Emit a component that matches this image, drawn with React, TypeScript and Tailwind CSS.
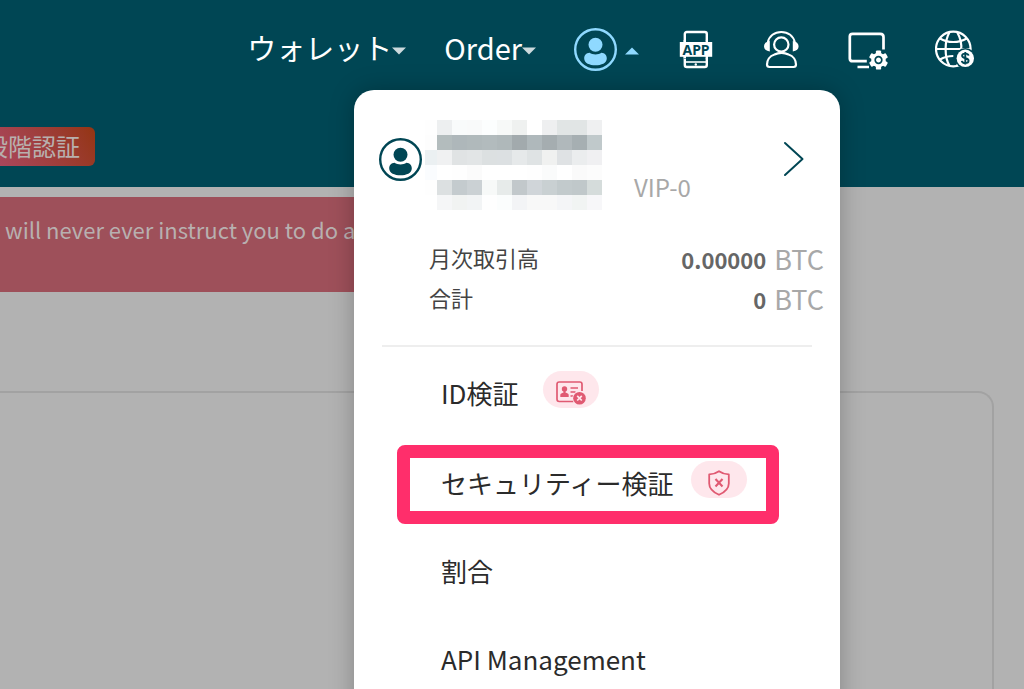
import React from 'react';

const MOSAIC = [
  ['#fefefe', '#edeff0', '#f9fbfb', '#f9fafa', '#fcfefe', '#f7f9f8', '#eff1f0', '#ffffff', '#eeeff0', '#e1e5e5', '#e1e5e5', '#eff0f1'],
  ['#fdfdfd', '#b3bcbd', '#aeb7ba', '#b0b9bb', '#b2bbbd', '#afb8ba', '#a2aaad', '#afb8bb', '#a5adb0', '#b0b8bb', '#a6afb2', '#c0c9cb'],
  ['#ebf0f2', '#f0f1f2', '#e0e3e4', '#e2e5e6', '#dce0e1', '#dce0e2', '#e6e9ea', '#dfe3e4', '#f0f1f0', '#dfe2e4', '#ebedee', '#f0f0f2'],
  ['#fafcfe', '#ffffff', '#fefefe', '#fbfbfb', '#ffffff', '#ffffff', '#ffffff', '#fefefe', '#fafbfb', '#ffffff', '#fafafa', '#fcfcfc'],
  ['#fefefe', '#dce0e1', '#c4cbce', '#cbd1d4', '#f7f9f8', '#e7ebea', '#c2c8cb', '#d0d5d9', '#c9d0d2', '#c2cacc', '#c0c8ca', '#d5dcdb'],
  ['#ffffff', '#f5f6f7', '#f1f3f2', '#f2f4f5', '#fefefe', '#fbfdfd', '#f3f4f6', '#f8f8f8', '#f8f8f8', '#f4f5f7', '#f1f4f3', '#f7f7f9'],
];

const UserIcon = ({ className }: { className?: string }) => (
  <svg width="43" height="43" viewBox="0 0 43 43" fill="none" className={className} aria-hidden="true">
    <circle cx="21.5" cy="21.5" r="20.3" stroke="currentColor" strokeWidth="2.4" />
    <circle cx="21.5" cy="16.8" r="7" fill="currentColor" />
    <path
      d="M15.600 24.800c-3.400.2-5.400 2.600-5.400 5.600 0 4.600 5.400 6.800 11.300 6.800s11.300-2.200 11.300-6.800c0-3-2-5.400-5.400-5.600-1.500 1-3.700 1.600-5.900 1.600s-4.400-.6-5.900-1.600z"
      fill="currentColor"
    />
  </svg>
);

const AppIcon = () => (
  <svg width="40" height="40" viewBox="0 0 40 40" fill="none" aria-hidden="true">
    <rect x="7.8" y="3" width="22" height="35" rx="2" stroke="currentColor" strokeWidth="2.4" />
    <path d="M8 33h22" stroke="currentColor" strokeWidth="1.6" />
    <rect x="7" y="11.500" width="24" height="18" fill="#004654" />
    <path d="M7.800 11v18M29.800 11v19" stroke="currentColor" strokeWidth="2.4" />
    <rect x="2.800" y="13" width="32.400" height="14.800" fill="currentColor" />
    <text x="19" y="25.500" textAnchor="middle" fontSize="14" fontWeight="700" fontFamily="'Noto Sans'" fill="#004654">
      APP
    </text>
    <circle cx="18.800" cy="35.500" r="1.200" fill="currentColor" />
  </svg>
);

const SupportIcon = () => (
  <svg width="40" height="40" viewBox="0 0 40 40" fill="none" stroke="currentColor" aria-hidden="true">
    <circle cx="18.300" cy="15.500" r="7.200" strokeWidth="2.200" />
    <path d="M4.800 13.500C6 7 11.500 3 18.300 3s12.300 4 13.500 10.500" strokeWidth="2" />
    <path d="M6.800 12v10.500C3 22 1 20 1 17.300S3 12.500 6.800 12zM29.800 12v10.500c3.800-.5 5.800-2.500 5.800-5.200s-2-4.800-5.800-5.300z" fill="currentColor" stroke="none" />
    <path d="M11.500 25.500C6.500 27 4 31.500 4 35.500 4 37 5 38 6.500 38h24c1.500 0 2.500-1 2.500-2.500 0-4-2.500-8.500-7.500-10-2.200-1.200-4.500-1.700-7-1.700s-4.800.5-7 1.700z" strokeWidth="2.200" />
  </svg>
);

const MonitorIcon = () => (
  <svg width="40" height="40" viewBox="0 0 40 40" fill="none" stroke="currentColor" className="overflow-visible" aria-hidden="true">
    <path d="M34.500 20.500V8c0-2-1.200-3.200-3.200-3.200H3.600C1.800 4.800.8 5.800.8 7.600v21.800c0 1.800 1 2.800 2.800 2.800h14.200M8.500 38H20" strokeWidth="2.700" />
    <g transform="translate(29.500 31)">
      <g fill="currentColor" stroke="none">
        <circle r="7.300" />
        <rect x="-2.600" y="-9.600" width="5.200" height="19.200" rx="1.200" />
        <rect x="-2.600" y="-9.600" width="5.200" height="19.200" rx="1.200" transform="rotate(60)" />
        <rect x="-2.600" y="-9.600" width="5.200" height="19.200" rx="1.200" transform="rotate(120)" />
      </g>
      <circle r="3.300" stroke="#004654" strokeWidth="1.700" />
    </g>
  </svg>
);

const GlobeIcon = () => (
  <svg width="40" height="40" viewBox="0 0 40 40" fill="none" stroke="currentColor" aria-hidden="true">
    <g strokeWidth="2.200">
      <circle cx="18.300" cy="20" r="17.300" />
      <path d="M1 20h34.500M5 9.500c3.800 2.300 8 3.500 13.300 3.500s9.500-1.200 13.300-3.500M5 30.500c3.800-2.300 8-3.500 13.300-3.500" />
      <path d="M14.500 3.200C9.300 12 9.300 28 14.500 36.800M22.200 3.200C25.500 9 27 15 26 21M22 37c1-2 1.500-3 2-5" />
    </g>
    <circle cx="30.300" cy="29.300" r="10.300" fill="#004654" stroke="none" />
    <circle cx="30.300" cy="29.300" r="8.700" fill="currentColor" stroke="none" />
    <path d="M33.600 26.600c-.3-1.300-1.500-2-3.300-2s-3.200.8-3.200 2.200c0 3.300 6.500 1.600 6.500 5 0 1.500-1.400 2.300-3.300 2.300s-3.300-.8-3.500-2.300M30.300 23v12.600" stroke="#004654" strokeWidth="1.900" />
  </svg>
);

const IdRejectedIcon = () => (
  <svg width="30" height="24" viewBox="0 0 30 24" fill="none" aria-hidden="true">
    <path d="M17.500 20.500H3.200c-1.400 0-2.200-.8-2.200-2.200V3.200C1 1.800 1.800 1 3.200 1h20.600c1.400 0 2.200.8 2.200 2.200V10" stroke="currentColor" strokeWidth="1.700" />
    <circle cx="8.500" cy="8" r="2.700" fill="currentColor" />
    <path d="M4.300 16v-2c0-1.500 1.500-2 3.200-2.500V9.500h2v2c1.700.5 3.200 1 3.200 2.500v2z" fill="currentColor" />
    <path d="M14.500 7h7.500M14.500 11h5M14.500 15h2.500" stroke="currentColor" strokeWidth="1.600" />
    <circle cx="23.500" cy="17.200" r="7" fill="#fee7ec" />
    <circle cx="23.500" cy="17.200" r="6.300" fill="currentColor" />
    <path d="M21.200 14.900l4.600 4.600M25.800 14.900l-4.600 4.600" stroke="#fee7ec" strokeWidth="1.700" />
  </svg>
);

const ShieldRejectedIcon = () => (
  <svg width="22" height="26" viewBox="0 0 22 26" fill="none" stroke="currentColor" aria-hidden="true">
    <path d="M11 1.200C8.500 3 5 4.200 1.200 4.400v9C1.200 18.500 5 22 11 24.800c6-2.800 9.800-6.300 9.800-11.400v-9C17 4.200 13.500 3 11 1.200z" strokeWidth="1.800" strokeLinejoin="round" />
    <path d="M7.500 9l7 7.500M14.500 9l-7 7.500" strokeWidth="2.100" />
  </svg>
);

const Caret = ({ up = false }: { up?: boolean }) => (
  <svg width="14" height="8" viewBox="0 0 14 8" fill="currentColor" aria-hidden="true">
    <path d={up ? 'M0 7.500h14L7 .5z' : 'M0 .5h14L7 7.500z'} />
  </svg>
);

const StatusPill = ({ children }: { children: React.ReactNode }) => (
  <span className="mb-[10px] flex h-[37px] w-14 items-center justify-center rounded-full bg-[#fee7ec] pt-2 text-[#e05a72]">
    {children}
  </span>
);

const Header = () => (
  <header className="bg-[#004654]">
    <nav className="flex h-[98px] items-center justify-end gap-[38px] pr-[49px] text-white">
      <button className="flex items-center text-[29px] leading-10">
        <span className="pb-1">ウォレット</span>
        <span className="pt-1 text-[#ccdadd]"><Caret /></span>
      </button>
      <button className="flex items-center text-[29px] leading-10">
        <span className="pb-1">Order</span>
        <span className="pt-1 text-[#ccdadd]"><Caret /></span>
      </button>
      <button aria-label="Account" className="flex items-center gap-2 text-[#8fd9ff]">
        <UserIcon />
        <span className="pt-1"><Caret up /></span>
      </button>
      <div className="flex items-center gap-[46px]">
        <button aria-label="App"><AppIcon /></button>
        <button aria-label="Support"><SupportIcon /></button>
        <button aria-label="Display settings"><MonitorIcon /></button>
        <button aria-label="Language and currency"><GlobeIcon /></button>
      </div>
    </nav>
    <div className="flex pt-[29px] pb-[21px]">
      <a
        href="#two-factor"
        className="-ml-8 rounded-md bg-linear-60 from-[#b04a6c] to-[#943510] pr-[15px] pb-[2px] pl-4 text-[24px] leading-[37px] text-[#b8b0ae]"
      >
        段階認証
      </a>
    </div>
  </header>
);

const AccountMenu = () => (
  <div className="absolute top-[90px] right-[184px] w-[486px] rounded-[20px] bg-white pt-[30px] pb-10 shadow-[0_0_24px_rgba(0,0,0,0.25)]">
    {/* Profile */}
    <div className="flex items-start pr-[35px] pl-[25px]">
      <UserIcon className="mt-[18px] text-[#004654]" />
      <div className="ml-[3px] grid grid-cols-[12px_repeat(11,15px)]">
        {MOSAIC.flat().map((color, i) => (
          <span key={i} className="h-[15px]" style={{ backgroundColor: color }} />
        ))}
      </div>
      <span className="mt-[51px] ml-8 text-[24px] leading-8 text-[#a8a8a8]">VIP-0</span>
      <button aria-label="Open profile" className="mt-[21px] ml-auto text-[#004654]">
        <svg width="22" height="36" viewBox="0 0 22 36" fill="none" aria-hidden="true">
          <path d="M2 2l17.500 16L2 34" stroke="currentColor" strokeWidth="2" strokeLinecap="round" strokeLinejoin="round" />
        </svg>
      </button>
    </div>

    {/* Volume */}
    <dl className="mt-[29px] mr-4 ml-[75px] text-[22px] leading-9">
      <div className="flex h-10 items-center justify-between">
        <dt className="pb-1 text-[#444444]">月次取引高</dt>
        <dd className="flex items-center gap-2 font-bold text-[#666666]">
          0.00000 <span className="text-[27px] font-normal text-[#a8a8a8]">BTC</span>
        </dd>
      </div>
      <div className="flex h-10 items-center justify-between">
        <dt className="pb-1 text-[#444444]">合計</dt>
        <dd className="flex items-center gap-2 font-bold text-[#666666]">
          0 <span className="text-[27px] font-normal text-[#a8a8a8]">BTC</span>
        </dd>
      </div>
    </dl>

    <hr className="mt-[26px] mr-7 ml-7 border-t-2 border-[#eeeeee]" />

    {/* Links */}
    <ul className="mt-[2px] text-[26px] text-[#2b2b2b]">
      <li className="flex h-[90px] items-center gap-6 pl-[87px]">
        <a href="#id" className="pb-1">ID検証</a>
        <StatusPill><IdRejectedIcon /></StatusPill>
      </li>
      <li className="relative flex h-[90px] items-center gap-[18px] pl-[87px]">
        <a href="#security" className="pb-1">セキュリティー検証</a>
        <StatusPill><ShieldRejectedIcon /></StatusPill>
        <span className="pointer-events-none absolute top-[6px] right-[61px] bottom-[5px] left-[43px] rounded-lg border-[13px] border-[#ff2e6b]" />
      </li>
      <li className="flex h-[86px] items-center pl-[87px]">
        <a href="#rates" className="pb-1">割合</a>
      </li>
      <li className="flex h-[90px] items-center pl-[87px]">
        <a href="#api" className="pb-1">API Management</a>
      </li>
    </ul>
  </div>
);

export default function App() {
  return (
    <div className="relative flex h-screen flex-col overflow-hidden bg-[#b2b2b2] font-['Noto_Sans_CJK_JP',sans-serif]">
      <Header />
      <main className="flex flex-1 flex-col pt-[10px]">
        <div className="mr-[40%] h-[95px] bg-[#9e505a] pt-4 pl-[5px] text-[22px] leading-8 whitespace-nowrap text-[#b8b0b0]">
          will never ever instruct you to do a
        </div>
        <section className="mt-[99px] mr-[30px] flex-1 rounded-tr-2xl border-t-2 border-r-2 border-[#a2a2a2]" />
      </main>
      <AccountMenu />
    </div>
  );
}
